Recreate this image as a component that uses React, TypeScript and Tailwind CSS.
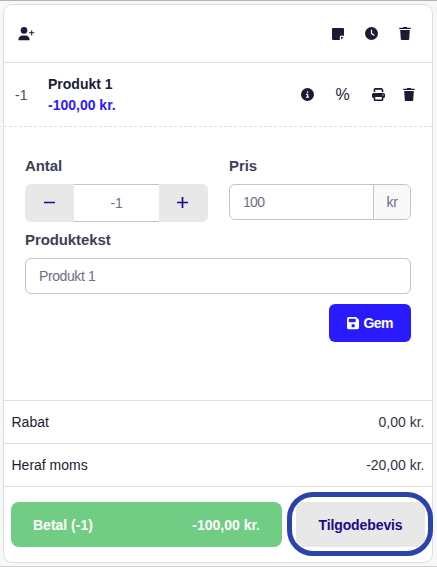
import { useState } from 'react'
import { FaCircleInfo, FaClock, FaFloppyDisk, FaPrint } from 'react-icons/fa6'

function UserAddIcon() {
  return (
    <svg width="17" height="14" viewBox="0 0 17 14" fill="currentColor">
      <circle cx="6" cy="3.4" r="3.3" />
      <path d="M.4 13.3v-.8C.4 10 2.500 8.400 4.800 8.400h2.400c2.300 0 4.400 1.600 4.400 4.100v.8z" />
      <path d="M13.200 3.200h1v2.100h2.100v1h-2.100v2.200h-1V6.300h-2.200v-1h2.200z" />
    </svg>
  )
}

function NoteIcon() {
  return (
    <svg width="12" height="12" viewBox="0 0 12 12" fill="currentColor">
      <path d="M1.200 0h9.600C11.500 0 12 .5 12 1.200V7.800H8.600C8.100 7.800 7.800 8.100 7.800 8.600V12H1.200C.5 12 0 11.500 0 10.800V1.200C0 .5.500 0 1.200 0z" />
      <path d="M9 9h2.600L9 11.600z" />
    </svg>
  )
}

function TrashIcon() {
  return (
    <svg width="12" height="13" viewBox="0 0 12 13" fill="currentColor">
      <path d="M4.300 0h3.400l.5.800h3c.4 0 .6.200.6.500v.7H.2v-.7c0-.3.200-.5.600-.5h3z" />
      <path d="M1.200 3h9.600l-.6 9.200c0 .5-.3.800-.8.800H2.600c-.5 0-.8-.3-.8-.8z" />
    </svg>
  )
}

const totals = [
  { label: 'Rabat', value: '0,00 kr.' },
  { label: 'Heraf moms', value: '-20,00 kr.' },
]

export default function App() {
  const [amount, setAmount] = useState(-1)
  const [price, setPrice] = useState('100')
  const [text, setText] = useState('Produkt 1')

  return (
    <div className="h-[567px] w-[437px] overflow-hidden border-t border-b border-t-[#b5b3b5] border-b-[#d2d2d2] bg-[#f7f7f7] pt-[3px] pl-[3px] font-['Liberation_Sans',Arial,sans-serif] text-sm text-[#1b1b35]">
      <div className="flex h-[559px] w-[430px] flex-col rounded-[9px] border border-[#dedede] bg-white">
        {/* Toolbar */}
        <div className="flex h-[58px] shrink-0 items-center justify-between border-b border-[#dedede] pr-[21px] pl-[14px]">
          <button><UserAddIcon /></button>
          <div className="flex items-center">
            <button className="mr-[21px]"><NoteIcon /></button>
            <button className="mr-[21px]"><FaClock size={13} /></button>
            <button><TrashIcon /></button>
          </div>
        </div>

        {/* Order line */}
        <div className="flex h-16 shrink-0 items-center border-b border-dashed border-[#dedede] pr-[17.5px] pl-[11px]">
          <span className="w-[33px] text-[#4a4a60]">-1</span>
          <div className="flex-1 font-bold leading-[21px]">
            <div>Produkt 1</div>
            <div className="text-[#2a1aff]">-100,00 kr.</div>
          </div>
          <button className="mr-[22px]"><FaCircleInfo size={13} /></button>
          <button className="mr-[22px] w-[14px] text-base leading-4">%</button>
          <button className="mr-[18px]"><FaPrint size={13} /></button>
          <button><TrashIcon /></button>
        </div>

        {/* Line editor */}
        <div className="flex h-[274px] shrink-0 flex-col border-b border-[#dedede] px-[21px] pt-[28px]">
          <div className="flex gap-[21px]">
            <div className="w-[183px]">
              <label className="block h-[29px] text-[15px] leading-[22px] font-bold tracking-[-0.1px] text-[#3f3f56]">Antal</label>
              <div className="flex h-[38px] overflow-hidden rounded-md bg-[#e8e8e8] text-[#1a0a9c]">
                <button onClick={() => setAmount(amount - 1)} className="flex w-[49px] items-center justify-center pb-[2px]">
                  <svg width="11" height="11" viewBox="0 0 11 11"><path d="M0 5.500h11" stroke="currentColor" strokeWidth="1.700" /></svg>
                </button>
                <div className="flex flex-1 items-center justify-center border-y border-[#c4c4c4] bg-white text-sm tracking-[-0.3px] text-[#6e6e87]">{amount}</div>
                <button onClick={() => setAmount(amount + 1)} className="flex w-[49px] items-center justify-center pr-[2px] pb-[2px]">
                  <svg width="11" height="11" viewBox="0 0 11 11"><path d="M0 5.500h11M5.500 0v11" stroke="currentColor" strokeWidth="1.700" /></svg>
                </button>
              </div>
            </div>
            <div className="w-[182px]">
              <label className="block h-[29px] text-[15px] leading-[22px] font-bold tracking-[-0.1px] text-[#3f3f56]">Pris</label>
              <div className="flex h-9 overflow-hidden rounded-md border border-[#c4c4c4]">
                <input value={price} onChange={e => setPrice(e.target.value)} className="min-w-0 flex-1 px-[13px] text-sm tracking-[-0.7px] text-[#6e6e87] outline-none" />
                <span className="flex w-[37px] items-center justify-center border-l border-[#c4c4c4] bg-[#f8f8f8] tracking-[-0.3px] text-[#6e6e87]">kr</span>
              </div>
            </div>
          </div>
          <label className="mt-[7px] block h-[29px] text-[15px] leading-[22px] font-bold tracking-[-0.1px] text-[#3f3f56]">Produktekst</label>
          <input value={text} onChange={e => setText(e.target.value)} className="h-9 w-full shrink-0 rounded-md border border-[#c4c4c4] px-[13px] pb-px text-sm tracking-[-0.4px] text-[#6e6e87] outline-none" />
          <button className="mt-[10px] flex h-[38px] w-[82px] shrink-0 items-center justify-center gap-1 self-end rounded-md bg-[#2a1aff] pb-px text-sm font-bold tracking-[-0.6px] text-white">
            <FaFloppyDisk className="h-[14px] w-[12.25px]" />
            Gem
          </button>
        </div>

        {/* Totals */}
        {totals.map(t => (
          <div key={t.label} className="flex h-[43px] shrink-0 items-center justify-between border-b border-[#dedede] px-[7.5px]">
            <span>{t.label}</span>
            <span className="text-[#33334b]">{t.value}</span>
          </div>
        ))}

        {/* Actions */}
        <div className="flex gap-[14px] px-[7px] pt-[15px]">
          <button className="flex h-[45px] w-[271px] items-center justify-between rounded-lg bg-[#71cd84] px-[22px] font-bold text-white">
            <span>Betal (-1)</span>
            <span>-100,00 kr.</span>
          </button>
          <button className="relative h-[45px] w-[129px] rounded-lg bg-[#e8e8e8] text-sm font-bold tracking-[-0.1px] text-[#1a0a8c]">
            Tilgodebevis
            <span className="pointer-events-none absolute -top-[10px] -left-[9px] h-16 w-[146px] rounded-[26px] border-5 border-[#2a43ab]" />
          </button>
        </div>
      </div>
    </div>
  )
}
